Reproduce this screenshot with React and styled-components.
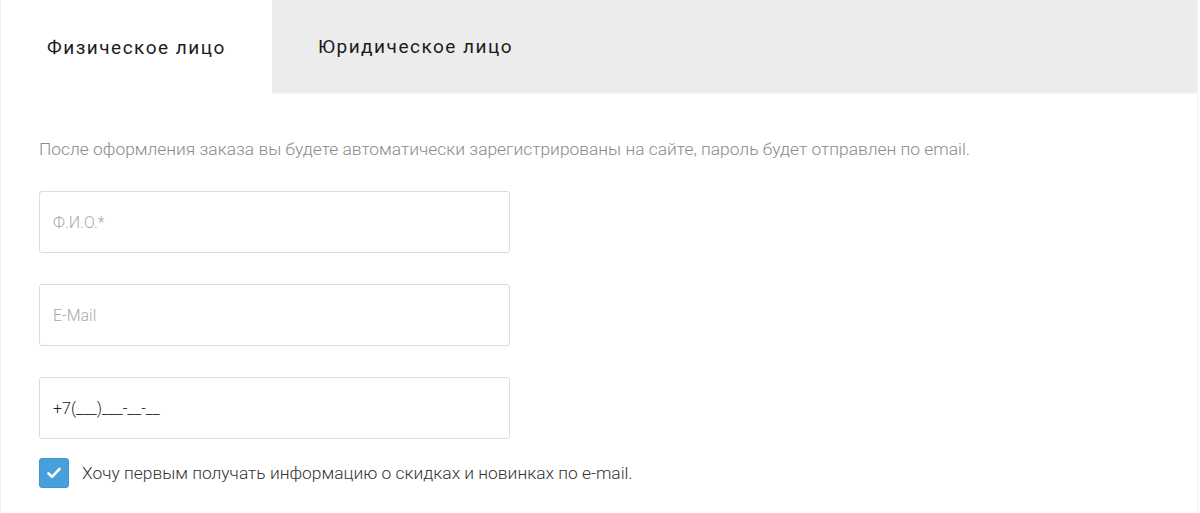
import React, { useState } from "react";
import styled, { createGlobalStyle } from "styled-components";

const GlobalStyle = createGlobalStyle`
  html, body {
    margin: 0;
    padding: 0;
    background: #fff;
    font-family: Roboto, "Noto Sans", sans-serif;
  }
`;

const Wrapper = styled.section`
  width: 1196px;
  height: 513px;
  border-left: 1px solid #f2f2f2;
  border-right: 1px solid #f2f2f2;
  box-sizing: content-box;
  overflow: hidden;
`;

const Tabs = styled.div`
  display: flex;
  height: 93px;
  background: #ececec;
  border-bottom: 1px solid #f4f4f4;
`;

const Tab = styled.button`
  width: ${props => (props.active ? "271px" : "auto")};
  flex: ${props => (props.active ? "none" : "1")};
  height: ${props => (props.active ? "94px" : "93px")};
  border: none;
  background: ${props => (props.active ? "#fff" : "transparent")};
  padding: 0 0 0 46px;
  text-align: left;
  font-family: Roboto, sans-serif;
  font-size: 19px;
  font-weight: 400;
  letter-spacing: 1.5px;
  color: #1c1c1c;
  cursor: pointer;
`;

const Body = styled.div`
  padding: 43px 38px 0;
`;

const Note = styled.p`
  margin: 0 0 30px;
  font-size: 17.4px;
  font-weight: 300;
  color: #8a8a8a;
  line-height: 24px;
`;

const Field = styled.input`
  display: block;
  width: 471px;
  height: 62px;
  box-sizing: border-box;
  margin-bottom: 31px;
  padding: 0 13px;
  border: 1px solid #dcdcdc;
  border-radius: 3px;
  font-family: Roboto, sans-serif;
  font-size: 16px;
  font-weight: 300;
  color: #222;
  outline: none;

  &::placeholder {
    color: #a8a8a8;
  }
`;

const CheckRow = styled.label`
  display: flex;
  align-items: center;
  gap: 13px;
  margin-top: -12px;
  cursor: pointer;
`;

const Box = styled.span`
  width: 30px;
  height: 30px;
  border-radius: 3px;
  background: ${props => (props.checked ? "#47a0dc" : "#fff")};
  border: 1px solid ${props => (props.checked ? "#3f95d0" : "#ccc")};
  box-sizing: border-box;
  display: flex;
  align-items: center;
  justify-content: center;
`;

const CheckText = styled.span`
  font-size: 17.4px;
  font-weight: 300;
  color: #333;
`;

export default function App() {
  const [active, setActive] = useState(0);
  const [checked, setChecked] = useState(true);
  return (
    <>
      <GlobalStyle />
      <Wrapper>
        <Tabs>
          <Tab active={active === 0} onClick={() => setActive(0)}>
            Физическое лицо
          </Tab>
          <Tab active={active === 1} onClick={() => setActive(1)}>
            Юридическое лицо
          </Tab>
        </Tabs>
        <Body>
          <Note>
            После оформления заказа вы будете автоматически зарегистрированы на сайте, пароль будет отправлен по email.
          </Note>
          <Field placeholder="Ф.И.О.*" />
          <Field placeholder="E-Mail" />
          <Field defaultValue="+7(___)___-__-__" />
          <CheckRow onClick={() => setChecked(!checked)}>
            <Box checked={checked}>
              {checked && (
                <svg width="14" height="12" viewBox="0 0 14 12">
                  <path d="M1.5 6.5 L5 9.8 L12.5 2" stroke="#fff" strokeWidth="2.6" fill="none" strokeLinecap="round" strokeLinejoin="round" />
                </svg>
              )}
            </Box>
            <CheckText>Хочу первым получать информацию о скидках и новинках по e-mail.</CheckText>
          </CheckRow>
        </Body>
      </Wrapper>
    </>
  );
}
